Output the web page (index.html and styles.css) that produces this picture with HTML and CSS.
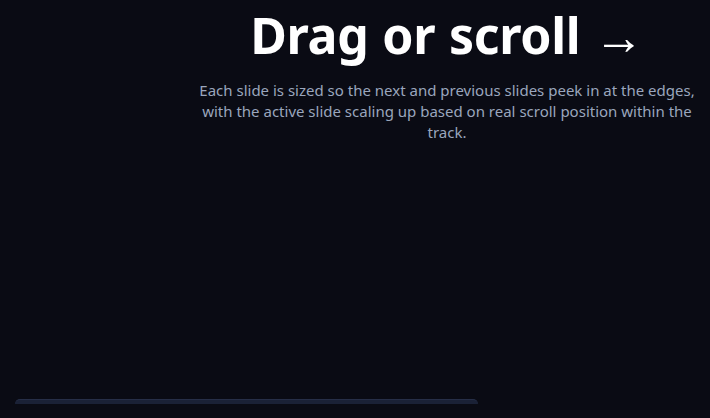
FILE: index.html
```html
<!DOCTYPE html>
<html lang="en">
<head>
<meta charset="utf-8">
<title>Drag or scroll</title>
<link rel="stylesheet" href="styles.css">
</head>
<body>
<main class="page">
  <header class="intro">
    <h1 class="title">Drag or scroll →</h1>
    <p class="lead">Each slide is sized so the next and previous slides peek in at the edges, with the active slide scaling up based on real scroll position within the track.</p>
  </header>
  <section class="track">
    <div class="slide"></div>
  </section>
</main>
</body>
</html>
```
FILE: styles.css
```css
html, body {
  margin: 0;
  padding: 0;
  background: #0a0b14;
  overflow: hidden;
  height: 418px;
}
.page {
  width: 894px;
  font-family: "Noto Sans", "Open Sans", sans-serif;
  display: flex;
  flex-direction: column;
}
.intro {
  display: flex;
  flex-direction: column;
  align-items: center;
  text-align: center;
  padding-top: 5px;
}
.title {
  margin: 0;
  color: #ffffff;
  font-size: 50px;
  font-weight: 700;
  line-height: 60px;
  letter-spacing: -0.3px;
  word-spacing: 1px;
}
.lead {
  margin: 15px 0 0;
  max-width: 500px;
  color: #9aa6bd;
  font-size: 15px;
  line-height: 21px;
}
.track {
  padding: 0 0 0 15px;
  margin-top: 256px;
}
.slide {
  width: 463px;
  height: 4px;
  border-radius: 6px 6px 0 0;
  background: #1a2136;
  border-top: 1px solid #262e47;
}
```
